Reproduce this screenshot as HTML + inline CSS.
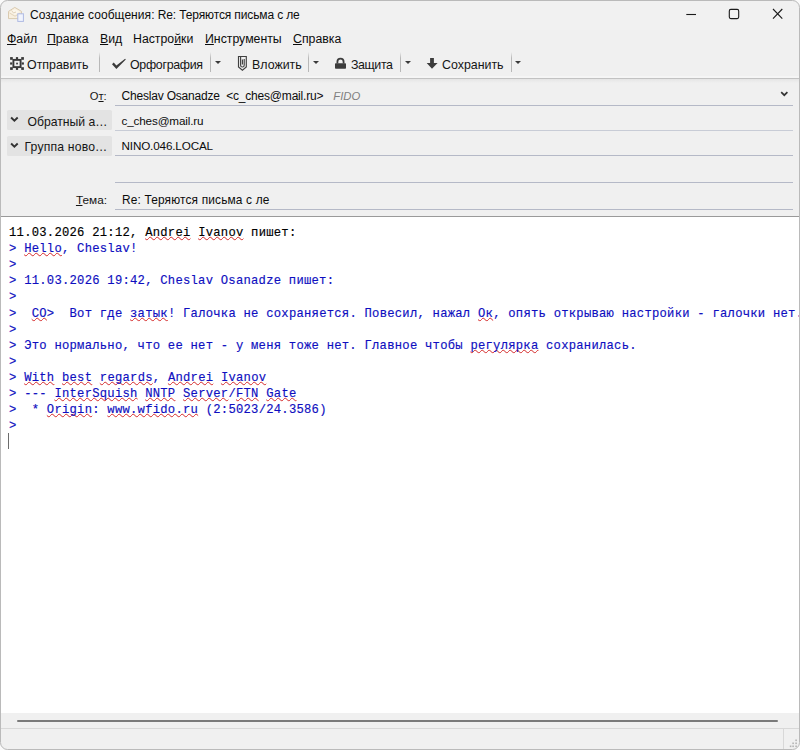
<!DOCTYPE html>
<html lang="ru"><head><meta charset="utf-8"><title>Создание сообщения</title>
<style>
*{box-sizing:border-box;margin:0;padding:0}
html,body{width:800px;height:750px;overflow:hidden;background:#fafafa}
body{font-family:"Liberation Sans",sans-serif;font-size:12px;color:#1a1a1a;position:relative}
.abs{position:absolute;white-space:nowrap}
#win{position:absolute;left:0;top:0;width:800px;height:750px;background:#f0f0f0;overflow:hidden}
#frame{position:absolute;left:0;top:0;width:800px;height:750px;border:1px solid #bababa;border-radius:7.5px;box-shadow:0 0 0 12px #fafafa;pointer-events:none}
#titlebg{position:absolute;left:0;top:0;width:800px;height:30px;background:#f1f1f1}
#title{left:30px;top:6.5px;font-size:12px;line-height:16px;color:#0c0c0c;letter-spacing:-0.05px}
.menu{top:30.6px;font-size:12.3px;line-height:16px;color:#0c0c0c}
.menu u{text-decoration:underline;text-underline-offset:1px}
.tb{top:57px;font-size:12.4px;line-height:16px;color:#151515}
.sep{position:absolute;width:1px;background:linear-gradient(rgba(184,184,184,0),#b8b8b8 30%,#b8b8b8);top:52px;height:19.5px}
.dd{position:absolute;top:60.8px;width:0;height:0;border-left:3.7px solid transparent;border-right:3.7px solid transparent;border-top:3.9px solid #3a3a3a}
#tbline{position:absolute;left:0;top:78px;width:800px;height:1px;background:#c2c2c2}
#tbshadow{position:absolute;left:0;top:79px;width:800px;height:4px;background:linear-gradient(#e5e5e5,#f0f0f0)}
#tbhi{position:absolute;left:0;top:76px;width:800px;height:2px;background:#f5f5f5}
.lbl{font-size:12.2px;line-height:16px;color:#151515}
.fld{font-size:11.7px;line-height:16px;color:#0c0c0c;letter-spacing:-0.15px}
.uline{position:absolute;left:115px;width:678px;height:1px;background:#b5b9c7}
.btn{position:absolute;left:7px;width:105px;height:20px;background:#e3e3e3;border-radius:1.5px}
#hdrline{position:absolute;left:0;top:216px;width:800px;height:1px;background:#9a9a9a}
#editor{position:absolute;left:1px;top:217px;width:798px;height:496px;background:#fff}
#ed{position:absolute;left:0;top:0;font-family:"Liberation Mono",monospace;font-size:12.2px;line-height:16px;letter-spacing:0.25px;color:#000;white-space:pre}
#ed .ln{position:absolute;left:9px;white-space:pre}
#ed .q{color:#0e0ec0}
#ed .ln{-webkit-text-stroke:0.15px currentColor}
#ed .s{text-decoration:underline wavy #d42a2a 1px;text-underline-offset:0px;text-decoration-skip-ink:none}
#caret{position:absolute;left:8px;top:432.5px;width:1px;height:16.5px;background:#6c6c6c}
#hscroll{position:absolute;left:17px;top:720px;width:761px;height:2px;background:#7a7a7a;border-radius:1px}
#statusline{position:absolute;left:0;top:728px;width:800px;height:1px;background:#d8d8d8}
#gripsep{position:absolute;left:783px;top:729px;width:1px;height:20px;background:#d8d8d8}
svg{position:absolute;left:0;top:0;overflow:visible}
</style></head><body>
<div id="win">
<div id="titlebg"></div>
<div id="title" class="abs"><span style="letter-spacing:0.06px">Создание сообщения:</span><span style="letter-spacing:-0.13px"> Re: Теряются письма с ле</span></div>

<div class="abs menu" style="left:7px"><u>Ф</u>айл</div>
<div class="abs menu" style="left:47px"><u>П</u>равка</div>
<div class="abs menu" style="left:100px"><u>В</u>ид</div>
<div class="abs menu" style="left:133px">Настро<u>й</u>ки</div>
<div class="abs menu" style="left:205px"><u>И</u>нструменты</div>
<div class="abs menu" style="left:293px"><u>С</u>правка</div>

<div class="abs tb" style="left:27px">Отправить</div>
<div class="sep" style="left:99px"></div>
<div class="abs tb" style="left:130px;letter-spacing:-0.3px">Орфография</div>
<div class="sep" style="left:210px"></div><div class="dd" style="left:214.7px"></div>
<div class="abs tb" style="left:252px">Вложить</div>
<div class="sep" style="left:308px"></div><div class="dd" style="left:313px"></div>
<div class="abs tb" style="left:351px;letter-spacing:-0.4px">Защита</div>
<div class="sep" style="left:400px"></div><div class="dd" style="left:404.5px"></div>
<div class="abs tb" style="left:442px">Сохранить</div>
<div class="sep" style="left:511px"></div><div class="dd" style="left:515px"></div>
<div id="tbhi"></div><div id="tbline"></div><div id="tbshadow"></div>

<div class="abs lbl" style="right:693.3px;top:87.7px;font-size:11.2px">О<u>т</u>:</div>
<div class="abs fld" style="left:121.5px;top:87.5px;white-space:pre;font-size:12px;letter-spacing:-0.19px">Cheslav Osanadze  &lt;c_ches@mail.ru&gt;<i style="color:#808080;font-size:11.3px;margin-left:10px;letter-spacing:0">FIDO</i></div>
<div class="uline" style="top:105px"></div>
<div class="btn" style="top:110px"></div>
<div class="abs lbl" style="left:27.5px;top:113.8px">Обратный а…</div>
<div class="abs fld" style="left:121.5px;top:112.5px">c_ches@mail.ru</div>
<div class="uline" style="top:130px;background:#c8ccd6"></div>
<div class="btn" style="top:136px"></div>
<div class="abs lbl" style="left:24.5px;top:138.8px;letter-spacing:0.18px">Группа ново…</div>
<div class="abs fld" style="left:121.5px;top:137.7px">NINO.046.LOCAL</div>
<div class="uline" style="top:155px"></div>
<div class="uline" style="top:182px"></div>
<div class="abs lbl" style="right:693px;top:191.9px;font-size:11.8px"><u>Т</u>ема:</div>
<div class="abs lbl" style="left:122px;top:191.9px;color:#0c0c0c;font-size:11.9px;letter-spacing:0.16px">Re: Теряются письма с ле</div>
<div class="uline" style="top:209px"></div>
<div id="hdrline"></div>

<div id="editor"></div>
<div id="ed">
<div class="ln" style="top:224.75px">11.03.2026 21:12, <span class="s">Andrei</span> <span class="s">Ivanov</span> пишет:</div>
<div class="ln q" style="top:241.22px">&gt; <span class="s">Hello</span>, Cheslav!</div>
<div class="ln q" style="top:257.29px">&gt;</div>
<div class="ln q" style="top:273.36px">&gt; 11.03.2026 19:42, Cheslav Osanadze пишет:</div>
<div class="ln q" style="top:289.43px">&gt;</div>
<div class="ln q" style="top:305.50px">&gt;  <span class="s">CO</span>&gt;  Вот где <span class="s">затык</span>! Галочка не сохраняется. Повесил, нажал <span class="s">Ок</span>, опять открываю настройки - галочки нет.</div>
<div class="ln q" style="top:321.57px">&gt;</div>
<div class="ln q" style="top:337.64px">&gt; Это нормально, что ее нет - у меня тоже нет. Главное чтобы <span class="s">регулярка</span> сохранилась.</div>
<div class="ln q" style="top:353.71px">&gt;</div>
<div class="ln q" style="top:369.78px">&gt; <span class="s">With</span> <span class="s">best</span> <span class="s">regards</span>, <span class="s">Andrei</span> <span class="s">Ivanov</span></div>
<div class="ln q" style="top:385.85px">&gt; --- <span class="s">InterSquish</span> <span class="s">NNTP</span> <span class="s">Server</span>/<span class="s">FTN</span> <span class="s">Gate</span></div>
<div class="ln q" style="top:401.92px">&gt;  * <span class="s">Origin</span>: <span class="s">www.wfido.ru</span> (2:5023/24.3586)</div>
<div class="ln q" style="top:417.99px">&gt;</div>
</div>
<div id="caret"></div>
<div id="hscroll"></div>
<div id="statusline"></div>
<div id="gripsep"></div>

<svg width="800" height="750" viewBox="0 0 800 750">
<!-- title icon -->
<path d="M8.5,11.4 L14.8,7.4 L21.5,11.4 V18.6 H8.5 Z" fill="#f8efdf" stroke="#d9cab0" stroke-width="1"/>
<path d="M10.2,11.8 L14.8,9.2 L19.6,11.8 L14.8,15 Z" fill="#fbf6ec"/>
<path d="M9.5,13 L15,16.2 L20.5,13" fill="none" stroke="#e2d5bd" stroke-width="1"/>
<path d="M11.5,10.5 L13.5,13 L16,12" fill="none" stroke="#dcccb2" stroke-width="0.9"/>
<rect x="17.8" y="13.8" width="5.6" height="7.6" fill="#f1f4fd" stroke="#aebae3" stroke-width="1"/>
<!-- window controls -->
<path d="M686.3,14.5 H696" stroke="#1a1a1a" stroke-width="1.1"/>
<rect x="729.3" y="9.4" width="9.4" height="9.2" rx="1.5" fill="none" stroke="#1a1a1a" stroke-width="1.1"/>
<path d="M773,9 L782.3,18.6 M782.3,9 L773,18.6" stroke="#1a1a1a" stroke-width="1.1"/>
<!-- send icon -->
<g fill="#383838">
<rect x="13.4" y="59.9" width="7.2" height="7.2" fill="none" stroke="#383838" stroke-width="1.9"/>
<rect x="16.2" y="62.7" width="1.7" height="1.7"/>
<rect x="10.1" y="57.1" width="2.7" height="2.7"/><rect x="21.2" y="57.1" width="2.7" height="2.7"/>
<rect x="10.1" y="67.2" width="2.7" height="2.7"/><rect x="21.2" y="67.2" width="2.7" height="2.7"/>
<rect x="15.9" y="57.1" width="2.2" height="2.2"/><rect x="15.9" y="67.7" width="2.2" height="2.2"/>
<rect x="10.1" y="62.4" width="2.2" height="2.2"/><rect x="21.7" y="62.4" width="2.2" height="2.2"/>
</g>
<!-- check -->
<path d="M112,64.3 L113.7,62.6 L116.4,65.5 L125.1,58.8 L125.8,59.4 L116.4,69.1 Z" fill="#3a3a3a"/>
<!-- paperclip -->
<g fill="none" stroke="#404040" stroke-width="1.15">
<path d="M238.5,56.5 H246.3 V67 L242.4,70.3 L238.5,67 Z"/>
<path d="M240.6,57 V65.2 Q240.6,67 242.4,67 Q244.2,67 244.2,65.2 V59"/>
<path d="M242.4,59.5 V64.5"/>
</g>
<!-- lock -->
<rect x="335" y="63.3" width="11" height="5.4" rx="0.8" fill="#3c3c3c"/>
<path d="M337.4,63.5 V61.8 A3.1,3.1 0 0 1 343.6,61.8 V63.5" fill="none" stroke="#3c3c3c" stroke-width="1.8"/>
<!-- save arrow -->
<path d="M430.1,58.1 H433.9 V63 H437.6 L432,68.7 L426.7,63 H430.1 Z" fill="#3c3c3c"/>
<!-- chevrons -->
<g fill="none" stroke="#333" stroke-width="1.9" stroke-linejoin="miter">
<path d="M11.1,117.5 L14.4,120.7 L17.7,117.5"/>
<path d="M11.1,143.5 L14.4,146.7 L17.7,143.5"/>
<path d="M781.2,92.2 L784.3,95.2 L787.4,92.2" stroke-width="1.7"/>
</g>
<!-- resize grip -->
<g fill="#b4b4b4">
<rect x="795.3" y="739.5" width="1.6" height="1.6"/>
<rect x="792.3" y="742.5" width="1.6" height="1.6"/><rect x="795.3" y="742.5" width="1.6" height="1.6"/>
<rect x="789.8" y="745.5" width="1.6" height="1.6"/><rect x="792.3" y="745.5" width="1.6" height="1.6"/><rect x="795.3" y="745.5" width="1.6" height="1.6"/>
</g>
</svg>
<div id="frame"></div>
</div>
</body></html>
